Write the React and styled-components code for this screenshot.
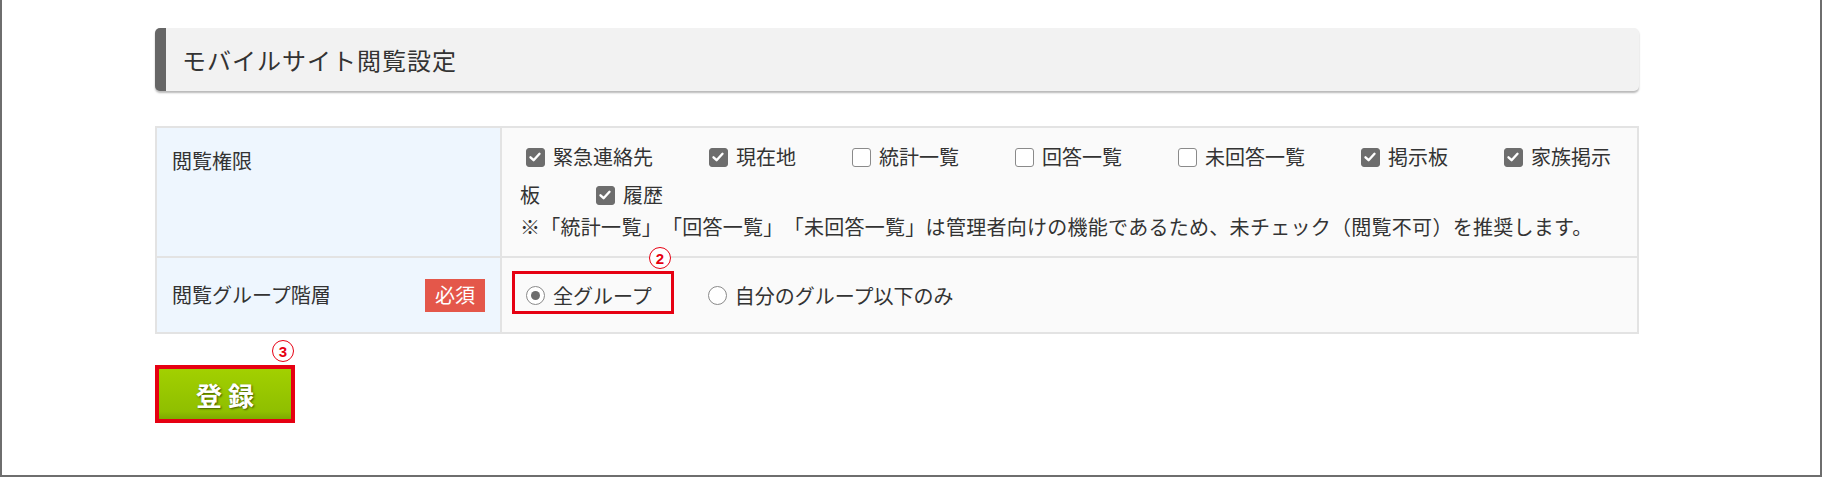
import React from 'react';
import styled, { createGlobalStyle } from 'styled-components';

const Global = createGlobalStyle`
  html, body { margin: 0; padding: 0; background: #fff; }
  body {
    font-family: "Noto Sans CJK JP", "Noto Sans", sans-serif;
    color: #333;
    overflow: hidden;
    text-spacing-trim: space-all;
  }
  * { box-sizing: border-box; }
`;

const Frame = styled.div`
  width: 1822px;
  height: 477px;
  border: 2px solid #6e6e6e;
  border-top: none;
  padding: 28px 0 0 153px;
`;

const Content = styled.div`
  width: 1484px;
`;

const SectionHeader = styled.h2`
  margin: 0;
  height: 63px;
  display: flex;
  align-items: center;
  background: #f2f2f2;
  border-left: 11px solid #666;
  border-radius: 5px;
  box-shadow: 0 2px 2px rgba(0, 0, 0, 0.28);
  padding-left: 16px;
  font-size: 24px;
  letter-spacing: 1px;
  font-weight: 400;
  color: #333;
`;

const FormTable = styled.div`
  margin-top: 35px;
  border: 2px solid #e3e3e3;
`;

const Row = styled.div`
  display: grid;
  grid-template-columns: 345px 1fr;
  & + & {
    border-top: 2px solid #e3e3e3;
  }
`;

const HeadCell = styled.div`
  background: #eef6fe;
  border-right: 2px solid #e3e3e3;
  font-size: 20px;
  line-height: 38px;
  padding: ${p => (p.$center ? '0 15px' : '14px 15px 0')};
  display: ${p => (p.$center ? 'flex' : 'block')};
  align-items: center;
  justify-content: space-between;
`;

const DataCell = styled.div`
  background: #fafafa;
  font-size: 20px;
  padding: ${p => (p.$center ? '0 18px' : '10px 18px 16px')};
  min-height: ${p => (p.$center ? '74px' : 'auto')};
  display: ${p => (p.$center ? 'flex' : 'block')};
  align-items: center;
`;

const CheckList = styled.div`
  line-height: 38px;
`;

const CheckItem = styled.label`
  display: inline;
  margin-right: 50px;
`;

const Box = styled.span`
  display: inline-block;
  width: 19px;
  height: 19px;
  margin: 0 8px 0 6px;
  vertical-align: middle;
  position: relative;
  top: -2px;
  border-radius: 3px;
  background: ${p => (p.$checked ? '#6d6d6d' : '#fff')};
  border: 1.5px solid ${p => (p.$checked ? '#6d6d6d' : '#8a8a8a')};
  svg { display: block; }
`;

const Note = styled.p`
  margin: 0;
  line-height: 26px;
  letter-spacing: 0.28px;
`;

const Badge = styled.span`
  display: inline-flex;
  align-items: center;
  justify-content: center;
  height: 33px;
  padding: 0 10px;
  background: #e4574a;
  color: #fff;
  font-size: 20px;
`;

const RadioItem = styled.label`
  position: relative;
  display: inline-flex;
  align-items: center;
  height: 38px;
  margin-right: 50px;
`;

const RadioCircle = styled.span`
  width: 19px;
  height: 19px;
  margin: 0 8px 0 6px;
  border-radius: 50%;
  border: 1.5px solid #8a8a8a;
  background: #fff;
  display: flex;
  align-items: center;
  justify-content: center;
  &::after {
    content: '';
    display: ${p => (p.$checked ? 'block' : 'none')};
    width: 9px;
    height: 9px;
    border-radius: 50%;
    background: #6d6d6d;
  }
`;

const Highlight = styled.span`
  position: absolute;
  left: -8px;
  right: -22px;
  top: -5px;
  bottom: 0;
  border: 3px solid #e60012;
  pointer-events: none;
`;

const StepMark = styled.span`
  position: absolute;
  left: ${p => p.$left}px;
  top: ${p => p.$top}px;
  width: 22px;
  height: 22px;
  border: 1.5px solid #e60012;
  border-radius: 50%;
  color: #e60012;
  font-family: "Liberation Sans", Arial, sans-serif;
  font-weight: 700;
  font-size: 15px;
  line-height: 1;
  display: flex;
  align-items: center;
  justify-content: center;
  background: #fff;
`;

const ButtonArea = styled.div`
  position: relative;
  margin-top: 31px;
  width: 140px;
`;

const SubmitButton = styled.button`
  display: block;
  width: 140px;
  height: 58px;
  border: 4px solid #e60012;
  padding: 0;
  background: linear-gradient(#a2d000, #8fbf00 85%, #7eaa00);
  color: #fff;
  font-family: "Noto Sans CJK JP", sans-serif;
  font-weight: 700;
  font-size: 26px;
  text-shadow: 1px 1px 2px rgba(0, 0, 0, 0.55);
  cursor: pointer;
`;

const Check = () => (
  <svg width="16" height="16" viewBox="0 0 16 16">
    <path d="M3.5 8.3 L6.6 11.2 L12.5 4.8" fill="none" stroke="#fff" strokeWidth="2.4" strokeLinecap="round" strokeLinejoin="round" />
  </svg>
);

const items = [
  ['緊急連絡先', true],
  ['現在地', true],
  ['統計一覧', false],
  ['回答一覧', false],
  ['未回答一覧', false],
  ['掲示板', true],
  ['家族掲示板', true],
  ['履歴', true],
];

export default function App() {
  return (
    <>
      <Global />
      <Frame>
        <Content>
          <SectionHeader>モバイルサイト閲覧設定</SectionHeader>
          <FormTable>
            <Row>
              <HeadCell>閲覧権限</HeadCell>
              <DataCell>
                <CheckList>
                  {items.map(([label, checked]) => (
                    <CheckItem key={label}>
                      <Box $checked={checked}>{checked && <Check />}</Box>
                      {label}
                    </CheckItem>
                  ))}
                </CheckList>
                <Note>※「統計一覧」「回答一覧」「未回答一覧」は管理者向けの機能であるため、未チェック（閲覧不可）を推奨します。</Note>
              </DataCell>
            </Row>
            <Row>
              <HeadCell $center>
                <span>閲覧グループ階層</span>
                <Badge>必須</Badge>
              </HeadCell>
              <DataCell $center>
                <RadioItem>
                  <RadioCircle $checked />
                  全グループ
                  <Highlight />
                  <StepMark $left={129} $top={-29}>2</StepMark>
                </RadioItem>
                <RadioItem>
                  <RadioCircle />
                  自分のグループ以下のみ
                </RadioItem>
              </DataCell>
            </Row>
          </FormTable>
          <ButtonArea>
            <SubmitButton type="button">登 録</SubmitButton>
            <StepMark $left={117} $top={-25}>3</StepMark>
          </ButtonArea>
        </Content>
      </Frame>
    </>
  );
}
